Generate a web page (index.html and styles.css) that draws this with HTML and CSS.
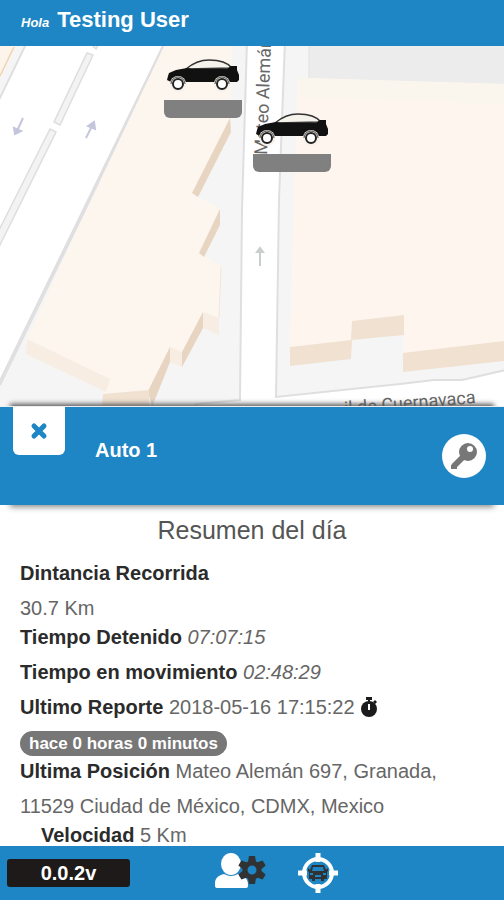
FILE: index.html
```html
<!DOCTYPE html>
<html lang="es">
  <head>
    <meta charset="UTF-8" />
    <meta name="viewport" content="width=device-width, initial-scale=1.0" />
    <title>Auto 1</title>
    <link rel="stylesheet" href="styles.css" />
  </head>
  <body>
    <header class="topbar">
      <em class="hello">Hola</em>
      <h1 class="user">Testing User</h1>
    </header>

    <main class="main">
      <section class="map" aria-label="Mapa">
        <svg class="map-canvas" viewBox="0 46 504 360" preserveAspectRatio="xMidYMid slice">
          <rect y="46" width="504" height="360" fill="#fff" />

          <!-- blocks -->
          <g fill="#f5f5f5" stroke="#dfdfe1" stroke-width="2">
            <path d="M-4 40H28L-4 106Z" />
            <path d="M166 40H247L242 210L240 400L196 404L190 412H-4V389Z" />
            <path d="M285 40H510V369L462 380L434 380L400 384L276 397L279 200Z" />
          </g>
          <path d="M-2 40H18L0 76Z" fill="#fdf5ec" />
          <path d="M14 47L0 76" stroke="#f3d3ae" stroke-width="1.5" />
          <path d="M309 46H504V90L309 84Z" fill="#ececec" />
          <path d="M309 46V80" stroke="#e0e0e0" />

          <!-- median -->
          <g fill="#f3f3f4" stroke="#dededf" stroke-width="1.5">
            <path d="M87 53L93 55L60 125L54 122Z" />
            <path d="M50 129L56 132L-4 253V236Z" />
            <path d="M93 46L96 49L99 44Z" />
          </g>

          <!-- buildings -->
          <path d="M163 46H232L230 118L193 195L220 208L199 253L221 266L219 318L203 312L183 352L170 347L149 390L103 394L110 380L27 339L85 212Z" fill="#fdf6ee" />
          <path d="M305 78L504 84V342L403 353L404 316L352 322V340L290 347L294 200L298 78Z" fill="#fef6ee" />
          <path d="M305 78L504 84V104L302 98L298 78Z" fill="#faf5ed" />
          <g fill="#e8d5c1">
            <path d="M230 118L231 132L198 197L192 193Z" />
            <path d="M220 209V225L204 257L199 253Z" />
            <path d="M203 312V328L182 367V352Z" />
            <path d="M170 347V362L152 407L148 391Z" />
          </g>
          <g fill="#f0e1d1">
            <path d="M103 394L149 390V407H102Z" />
            <path d="M290 347L352 340L351 359L290 366Z" />
            <path d="M352 321L404 315V335L351 340Z" />
            <path d="M403 353L504 341V361L403 372Z" />
          </g>
          <g fill="#f8ede2">
            <path d="M203 312L219 318V335L203 328Z" />
            <path d="M170 347L182 352V367L170 362Z" />
            <path d="M27 339L110 379L106 392L26 354Z" />
          </g>
          <path d="M163 46L85 210L0 385" fill="none" stroke="#dfdfe1" stroke-width="2" />
          <path d="M221 266L219 318" stroke="#f5e5d8" />

          <!-- traffic direction -->
          <g fill="#c5c6dc" stroke="#c5c6dc" stroke-width="2">
            <path d="M23 118L17 131M14 128L15 134L21 131Z" />
            <path d="M86 138L92 126M88 126L94 122L95 129Z" />
            <path d="M260 266V252M257 252L260 248L263 252Z" fill="#c9cfcf" stroke="#c9cfcf" />
          </g>

          <text class="street" transform="translate(267 155) rotate(-88)">Mateo Alemán</text>
          <text class="street" text-anchor="end" transform="translate(476 403) rotate(-5)">il de Cuernavaca</text>
        </svg>

        <button class="marker marker-one" aria-label="Auto 1">
          <svg class="car" viewBox="0 0 72 34">
            <use href="#car" />
          </svg>
          <span class="marker-bar"></span>
        </button>
        <button class="marker marker-two" aria-label="Auto 2">
          <svg class="car" viewBox="0 0 72 34">
            <g id="car">
              <path d="M19 11C26 5 33 2 42 2C54 2 61 5 65 10Z" fill="#f6f2ec" stroke="#333" stroke-width="1.5" />
              <path d="M1 18L2 15L9 12L20 10L25 11L60 11L64 8H70V12L72 17V22L70 24H4L0 22Z" fill="#111" />
              <g fill="#f7f1e9">
                <circle cx="11" cy="26" r="8" />
                <circle cx="55" cy="26" r="8" />
              </g>
              <g fill="#fff" stroke="#222" stroke-width="2">
                <circle cx="11" cy="26" r="5" />
                <circle cx="55" cy="26" r="5" />
              </g>
              <g fill="none" stroke="#444">
                <path d="M4 26A7 7 0 0 1 18 26M48 26A7 7 0 0 1 62 26" />
              </g>
            </g>
          </svg>
          <span class="marker-bar"></span>
        </button>
      </section>

      <section class="vehicle">
        <button class="close" aria-label="Cerrar">
          <svg width="18" height="18" viewBox="0 0 18 18">
            <path d="M4 4L14 14M14 4L4 14" stroke="#1e86c4" stroke-width="5" stroke-linecap="round" />
          </svg>
        </button>
        <h2 class="vehicle-name">Auto 1</h2>
        <button class="key" aria-label="Llave">
          <svg width="26" height="26" viewBox="0 0 26 26">
            <path d="M13 13L3 23" stroke="#777" stroke-width="6" />
            <path d="M3 20L0 22V26H6V22Z" fill="#777" />
            <path fill="#777" fill-rule="evenodd" d="M17 0a9 9 0 1 0 0 18a9 9 0 1 0 0-18ZM19 3a3 3 0 1 1 0 6a3 3 0 1 1 0-6Z" />
          </svg>
        </button>
      </section>

      <section class="details">
        <h3 class="details-title">Resumen del día</h3>
        <p><strong>Dintancia Recorrida</strong></p>
        <p>30.7 Km</p>
        <p class="tight"><strong>Tiempo Detenido</strong> <em>07:07:15</em></p>
        <p><strong>Tiempo en movimiento</strong> <em>02:48:29</em></p>
        <p>
          <strong>Ultimo Reporte</strong> 2018-05-16 17:15:22
          <svg class="stopwatch" viewBox="0 0 18 20">
            <path d="M6 0h6v3H6zM8 2h2v4H8zM13 5l2-2 2 2-2 2z" fill="#1b1b1b" />
            <circle cx="9" cy="12" r="8" fill="#1b1b1b" />
            <path d="M9 7v6" stroke="#fff" stroke-width="2" />
          </svg>
        </p>
        <p class="ago"><span class="badge">hace 0 horas 0 minutos</span></p>
        <p class="tight"><strong>Ultima Posición</strong> Mateo Alemán 697, Granada, 11529 Ciudad de México, CDMX, Mexico</p>
        <p class="tight speed"><strong>Velocidad</strong> 5 Km</p>
      </section>
    </main>

    <footer class="bottombar">
      <span class="version">0.0.2v</span>
      <nav class="actions">
        <button class="action" aria-label="Configurar usuario">
          <svg width="52" height="40" viewBox="0 0 52 40">
            <ellipse cx="17" cy="11" rx="10" ry="11" fill="#fff" />
            <path d="M1 33V30C1 25 5 22 10 21Q17 25 24 21C30 22 34 26 34 31V33Q34 35 31 35H4Q1 35 1 33Z" fill="#fff" />
            <g transform="translate(38 17)" fill="#303233">
              <circle r="7" fill="none" stroke="#303233" stroke-width="5" />
              <path id="tooth" d="M-3-14H3L4-8H-4Z" />
              <use href="#tooth" transform="rotate(60)" />
              <use href="#tooth" transform="rotate(120)" />
              <use href="#tooth" transform="rotate(180)" />
              <use href="#tooth" transform="rotate(240)" />
              <use href="#tooth" transform="rotate(300)" />
            </g>
          </svg>
        </button>
        <button class="action" aria-label="Centrar vehículo">
          <svg width="40" height="40" viewBox="0 0 40 40">
            <circle cx="20" cy="20" r="14" fill="none" stroke="#fff" stroke-width="4" />
            <path d="M20 0V9M20 31V40M0 20H9M31 20H40" stroke="#fff" stroke-width="5" />
            <path fill="#303233" fill-rule="evenodd" d="M14 12H26L28 17L30 15V18L29 19V26H26V28H23V26H17V28H14V26H11V19L10 18V15L12 17ZM15 14L14 18H26L25 14ZM12 20V22H15V20ZM25 20V22H28V20ZM17 22V24H23V22Z" />
          </svg>
        </button>
      </nav>
    </footer>
  </body>
</html>
```
FILE: styles.css
```css
* {
  box-sizing: border-box;
  margin: 0;
  padding: 0;
}
body {
  font-family: "Liberation Sans", Arial, sans-serif;
  font-size: 20px;
  color: #666;
  background: #fff;
  display: flex;
  flex-direction: column;
  height: 100vh;
  overflow: hidden;
}
button {
  border: none;
  background: none;
  cursor: pointer;
}
svg {
  display: block;
}

/* top bar */
.topbar {
  display: flex;
  align-items: baseline;
  gap: 8px;
  padding: 7px 21px 11px;
  line-height: 25px;
  background: #1e86c4;
  color: #fff;
}
.hello {
  font-size: 13px;
  font-weight: bold;
}
.user {
  font-size: 22px;
}

.main {
  flex: 1;
  min-height: 0;
  display: flex;
  flex-direction: column;
}

/* map */
.map {
  position: relative;
  flex: 0 0 40vh;
  overflow: hidden;
}
.map-canvas {
  width: 100%;
  height: 100%;
}
.street {
  font-family: Roboto, sans-serif;
  font-size: 18px;
  fill: #666;
}
.marker {
  position: absolute;
  display: flex;
  flex-direction: column;
  align-items: center;
  gap: 8px;
  width: 78px;
}
.marker-one {
  left: 164px;
  top: 12px;
}
.marker-two {
  left: 253px;
  top: 66px;
}
.car {
  width: 72px;
  height: 34px;
}
.marker-bar {
  width: 100%;
  height: 18px;
  border-radius: 0 0 6px 6px;
  background: #808080;
}

/* selected vehicle */
.vehicle {
  position: relative;
  display: flex;
  align-items: center;
  flex: 0 0 99px;
  padding: 0 18px 0 13px;
  border-top: 1px solid #eee;
  background: #1e86c4;
  color: #fff;
  box-shadow: 0 -12px 5px -10px #555, 0 12px 6px -10px #888;
}
.close {
  display: flex;
  justify-content: center;
  align-items: center;
  align-self: flex-start;
  width: 52px;
  height: 48px;
  border-radius: 0 0 6px 6px;
  background: #fff;
}
.vehicle-name {
  flex: 1;
  padding: 0 30px 12px;
  font-size: 20px;
}
.key {
  display: flex;
  justify-content: center;
  align-items: center;
  width: 44px;
  height: 44px;
  border-radius: 50%;
  background: #fff;
}

/* summary */
.details {
  flex: 1;
  min-height: 0;
  padding: 0 20px;
  overflow: hidden;
  line-height: 35px;
}
.details-title {
  font-size: 25px;
  font-weight: normal;
  line-height: 51px;
  text-align: center;
  color: #555;
}
.details strong {
  color: #2b2b2b;
}
.details .tight {
  margin-top: -6px;
}
.details .speed {
  padding-left: 21px;
}
.stopwatch {
  display: inline-block;
  width: 18px;
  height: 20px;
  vertical-align: -3px;
}
.ago {
  display: flex;
  align-items: flex-end;
  height: 35px;
  padding-bottom: 4px;
}
.badge {
  padding: 0 9px;
  border-radius: 13px;
  background: #777;
  color: #fff;
  font-size: 17px;
  font-weight: bold;
  line-height: 25px;
}

/* bottom bar */
.bottombar {
  display: flex;
  align-items: center;
  gap: 84px;
  height: 54px;
  padding: 0 7px;
  background: #1e86c4;
}
.version {
  width: 123px;
  border-radius: 3px;
  background: #1d1a19;
  color: #fff;
  font-weight: bold;
  line-height: 28px;
  text-align: center;
}
.actions {
  display: flex;
  gap: 32px;
}
```
